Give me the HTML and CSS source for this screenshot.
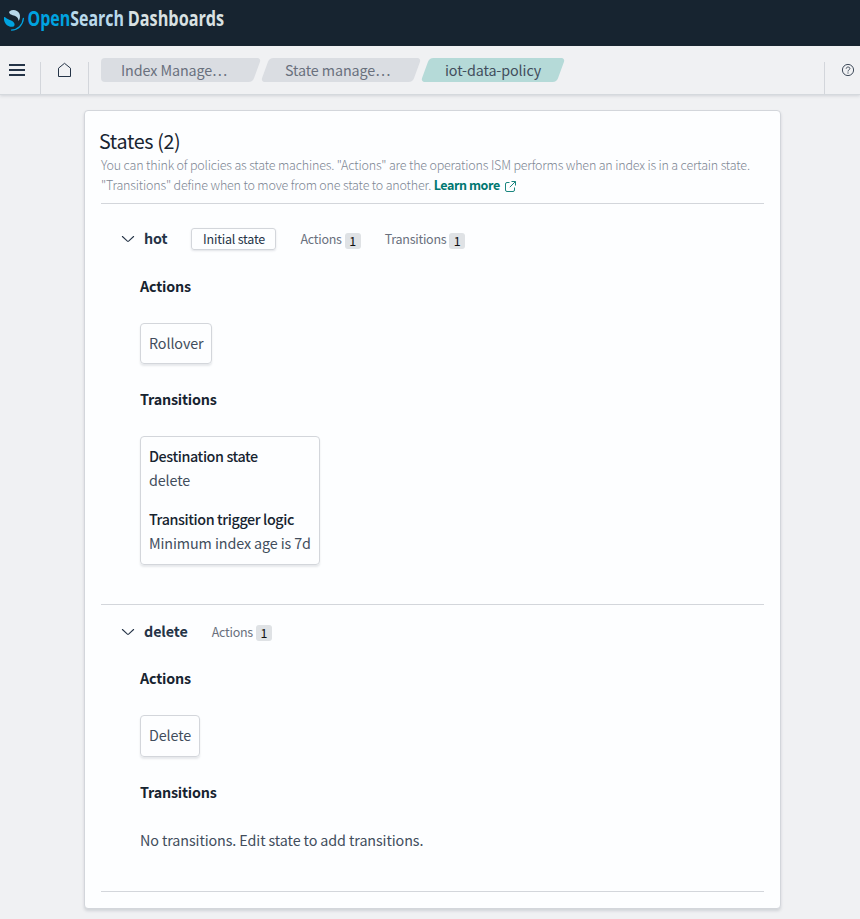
FILE: index.html
```html
<!DOCTYPE html>
<html lang="en">
<head>
<meta charset="utf-8">
<title>OpenSearch Dashboards</title>
<link rel="stylesheet" href="styles.css">
</head>
<body>
<header class="brand">
  <svg class="logo" width="240" height="40" viewBox="0 0 240 40" role="img">
    <path fill="#00a3e0" d="M4 17.2C3.4 22.5 7 27 12.4 26.8C14.4 26.6 15.2 25 14.2 23C13 20.6 9.6 20.2 7.3 18.8C5.6 17.8 4.8 16.6 4 17.2Z"/>
    <path fill="#b9d9eb" d="M9.6 11.2C12.5 9 17.7 9.8 19.4 13.6C20.4 16 20.2 18.8 18.6 21C18.2 17.4 16.6 16.2 13.6 15.4C11.2 14.7 8 13.4 9.6 11.2Z"/>
    <path fill="none" stroke="#00a3e0" stroke-width="1.3" stroke-linecap="round" d="M23.4 18.3C22.8 25.2 17.8 29.9 11.5 30.1"/>
    <g class="wordmark">
      <text transform="translate(27.6 26.3) scale(.725 1)" fill="#00a3e0">Open<tspan fill="#b9d9eb">Search</tspan></text>
      <text transform="translate(127.8 26.3) scale(.738 1)" fill="#d9e1e2">Dashboards</text>
    </g>
  </svg>
</header>
<nav class="toolbar">
  <div class="tool tool-menu">
    <svg width="16" height="16" viewBox="0 0 16 16"><path fill="#253447" d="M0 2h16v2H0zM0 7h16v2H0zM0 12h16v2H0z"/></svg>
  </div>
  <div class="tool tool-home">
    <svg width="16" height="16" viewBox="0 0 16 16"><path fill="none" stroke="#253447" stroke-linejoin="round" d="M2.5 6.2L8.5 1.3L14.5 6.2V14.5H2.5Z"/></svg>
  </div>
  <div class="crumbs">
    <span class="crumb crumb-first">Index Manage…</span>
    <span class="crumb crumb-mid">State manage…</span>
    <span class="crumb crumb-last">iot-data-policy</span>
  </div>
  <div class="tool tool-help">
    <svg width="14" height="14" viewBox="0 0 14 14" fill="none" stroke="#414d5c"><circle cx="7" cy="7" r="5.6"/><path d="M5.2 5.7C5.2 3.5 8.9 3.5 8.9 5.6C8.9 6.8 7 6.8 7 8.5M7 9.4V10.6"/></svg>
  </div>
</nav>
<main class="panel">
  <h1 class="title">States (2)</h1>
  <p class="intro"><span class="line">You can think of policies as state machines. "Actions" are the operations ISM performs when an index is in a certain state.</span><span class="line">"Transitions" define when to move from one state to another. <a class="link">Learn more <svg class="ext" width="11" height="11" viewBox="0 0 11 11" fill="none" stroke="#007871" stroke-width=".9"><path d="M4.5 1.5H2A1.5 1.5 0 0 0 .5 3V9A1.5 1.5 0 0 0 2 10.5H8A1.5 1.5 0 0 0 9.5 9V6.5M6.5 .5H10.5V4.5M10.3 .7L4.8 6.2"/></svg></a></span></p>

  <section class="state state-hot">
    <div class="summary">
      <svg class="chevron" width="16" height="16" viewBox="0 0 16 16"><path fill="none" stroke="#253447" stroke-width="1.1" stroke-linecap="round" d="M2.4 5.5L7.4 10.2Q8 10.7 8.6 10.2L13.6 5.5"/></svg>
      <strong class="name">hot</strong>
      <span class="initial">Initial state</span>
      <span class="count">Actions <b class="badge">1</b></span>
      <span class="count count-next">Transitions <b class="badge">1</b></span>
    </div>
    <h2 class="subhead">Actions</h2>
    <div class="card card-rollover">Rollover</div>
    <h2 class="subhead">Transitions</h2>
    <dl class="card card-transition">
      <dt>Destination state</dt><dd>delete</dd>
      <dt>Transition trigger logic</dt><dd>Minimum index age is 7d</dd>
    </dl>
  </section>

  <section class="state state-delete">
    <div class="summary">
      <svg class="chevron" width="16" height="16" viewBox="0 0 16 16"><path fill="none" stroke="#253447" stroke-width="1.1" stroke-linecap="round" d="M2.4 5.5L7.4 10.2Q8 10.7 8.6 10.2L13.6 5.5"/></svg>
      <strong class="name">delete</strong>
      <span class="count">Actions <b class="badge">1</b></span>
    </div>
    <h2 class="subhead">Actions</h2>
    <div class="card card-delete">Delete</div>
    <h2 class="subhead">Transitions</h2>
    <p class="empty">No transitions. Edit state to add transitions.</p>
  </section>
</main>
</body>
</html>
```

FILE: styles.css
```css
* { box-sizing: border-box; }
html, body { height: 100%; }
body {
  margin: 0;
  overflow: hidden;
  background: #f0f1f3;
  color: #414d5c;
  font-family: "Noto Sans CJK SC", "Noto Sans", sans-serif;
  font-size: 14.33px;
  line-height: 24px;
  letter-spacing: -.1px;
}
h1, h2, p, dl, dd { margin: 0; }
svg { display: block; }

.brand { height: 46px; background: #172430; }
.wordmark { font: 700 22px "Open Sans", sans-serif; letter-spacing: 0; }

.toolbar {
  display: flex;
  height: 49px;
  border-bottom: 1px solid #d5d9dd;
  background: #f0f1f3;
  box-shadow: 0 1px 3px rgba(65, 77, 92, .18);
}
.tool { margin-top: 16px; height: 32px; }
.tool-menu { width: 41px; padding-left: 9px; border-right: 1px solid #d3d6db; }
.tool-home { width: 48px; padding-left: 15px; border-right: 1px solid #d3d6db; }
.tool-help { width: 36px; margin-left: auto; padding: 1px 0 0 16px; border-left: 1px solid #d3d6db; }
.crumbs { display: flex; gap: 8px; padding: 12px 0 0 12px; }
.crumb { position: relative; z-index: 0; height: 24px; color: #69707d; }
.crumb::before {
  content: "";
  position: absolute;
  z-index: -1;
  inset: 0;
  border-radius: 4px;
  background: #dadde2;
  transform: skewX(-20deg);
}
.crumb-first { width: 156px; padding-left: 20px; }
.crumb-first::after {
  content: "";
  position: absolute;
  z-index: -1;
  inset: 0 20px 0 0;
  border-radius: 4px 0 0 4px;
  background: #dadde2;
}
.crumb-first::before { left: 20px; }
.crumb-mid { width: 152px; padding-left: 20px; }
.crumb-last { width: 136px; padding-left: 20px; color: #414d5c; }
.crumb-last::before { background: #b5dad8; }

.panel {
  width: 697px;
  height: 799px;
  margin: 15px 0 0 84px;
  padding: 17px 16px 0;
  border: 1px solid #d3d6db;
  border-radius: 4px;
  background: #fdfeff;
  box-shadow: 0 2px 3px rgba(65, 77, 92, .18);
}
.title { margin: 0 0 2px -2px; color: #172430; font-size: 19.7px; font-weight: 400; line-height: 25px; letter-spacing: -.35px; }
.intro { height: 49px; border-bottom: 1px solid #d3d6db; color: #7d8794; font-size: 12.5px; font-weight: 300; line-height: 20px; letter-spacing: -.18px; white-space: nowrap; }
.line { display: block; }
.link { color: #007871; font-weight: 700; letter-spacing: -.43px; }
.ext { display: inline-block; margin-left: 3px; vertical-align: -2px; }

.state { border-bottom: 1px solid #d3d6db; padding-left: 39px; }
.state-hot { height: 401px; padding-top: 23px; }
.state-delete { height: 287px; padding-top: 15px; }
.summary { display: flex; height: 24px; margin-left: -20px; align-items: center; }
.name { margin: -2px 0 0 8px; color: #253447; }
.initial {
  width: 85px;
  height: 22px;
  margin: 0 24px;
  border: 1px solid #d3d6db;
  border-radius: 3px;
  color: #253447;
  font-size: 12.5px;
  line-height: 20px;
  letter-spacing: -.2px;
  text-align: center;
  box-shadow: 0 1px 2px rgba(65, 77, 92, .15);
}
.count { display: flex; gap: 3px; color: #69707d; font-size: 12.5px; letter-spacing: -.26px; }
.name + .count { margin-left: 24px; }
.count-next { margin-left: 24px; }
.badge {
  width: 16px;
  height: 16px;
  margin-top: 5px;
  border-radius: 3px;
  background: #dfe2e5;
  color: #111;
  font-size: 12.5px;
  font-weight: 400;
  line-height: 16px;
  letter-spacing: 0;
  text-align: center;
}
.state-hot .badge { margin-top: 6px; }
.subhead { margin-top: 23px; color: #172430; font-size: 14.33px; font-weight: 700; line-height: 24px; letter-spacing: -.2px; }
.card {
  margin-top: 25px;
  border: 1px solid #d3d6db;
  border-radius: 4px;
  padding: 7px 8px;
  box-shadow: 0 2px 2px rgba(65, 77, 92, .12);
}
.card-rollover { width: 72px; height: 41px; }
.card-delete { width: 60px; height: 42px; }
.card-transition { width: 180px; height: 129px; white-space: nowrap; }
.card-transition dt { color: #172430; font-weight: 500; letter-spacing: -.4px; }
.card-transition dd + dt { margin-top: 15px; }
.state-delete .subhead:nth-of-type(1) { margin-top: 22px; }
.state-delete .subhead:nth-of-type(2) { margin-top: 23px; }
.empty { margin-top: 24px; }
```
